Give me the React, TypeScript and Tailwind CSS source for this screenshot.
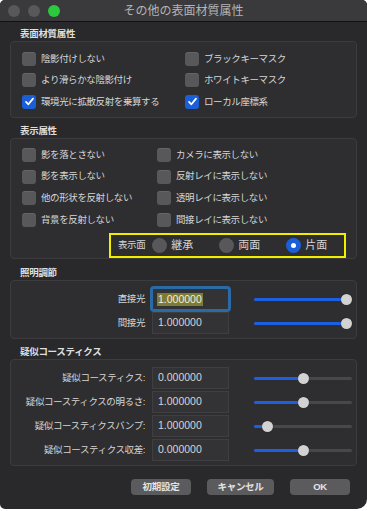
import type { ReactNode } from 'react';

const FONT = "font-['Liberation_Sans','Noto_Sans_CJK_JP',sans-serif]";

function Check({ checked, label }: { checked?: boolean; label: string }) {
  return (
    <div className="flex items-center gap-[5px]">
      {checked ? (
        <span className="w-[14px] h-[14px] rounded-[3px] bg-[#1b5fd8] flex items-center justify-center shrink-0">
          <svg width="11" height="11" viewBox="0 0 11 11">
            <path d="M2 5.8 L4.4 8.3 L9 2.6" fill="none" stroke="white" strokeWidth="1.7" strokeLinecap="round" strokeLinejoin="round" />
          </svg>
        </span>
      ) : (
        <span className="w-[14px] h-[14px] rounded-[3px] bg-[#58585a] shadow-[inset_0_1px_0_rgba(255,255,255,0.08)] shrink-0" />
      )}
      <span className="text-[9.5px] tracking-[-0.4px] text-[#d6d6d6] whitespace-nowrap">{label}</span>
    </div>
  );
}

function Radio({ on, label }: { on?: boolean; label: string }) {
  return (
    <div className="flex items-center gap-[4px]">
      {on ? (
        <span className="w-[15px] h-[15px] rounded-full bg-[#1b5fd8] flex items-center justify-center">
          <span className="w-[5px] h-[5px] rounded-full bg-white" />
        </span>
      ) : (
        <span className="w-[15px] h-[15px] rounded-full bg-[#58585a]" />
      )}
      <span className="text-[11px] text-[#d6d6d6]">{label}</span>
    </div>
  );
}

function Section({ title, mt, h, children }: { title: string; mt: string; h: string; children: ReactNode }) {
  return (
    <div className={mt}>
      <div className="h-[14px] leading-[14px] pl-[20px] text-[9.5px] tracking-[-0.3px] text-[#dedede] font-semibold">{title}</div>
      <div className={`mx-[10px] ${h} rounded-[4px] border border-[#3c3c3e] bg-[#2e2e30]`}>{children}</div>
    </div>
  );
}

function Slider({ pct, track }: { pct: number; track: string }) {
  return (
    <div className={`relative h-[11px] ${track} flex items-center`}>
      <div className="h-[3px] w-full rounded-full bg-[#48484a]" />
      <div className="absolute left-0 h-[3px] rounded-full bg-[#1c5fe0]" style={{ width: `${pct}%` }} />
      <div
        className="absolute w-[11px] h-[11px] rounded-full bg-[#d2d2d2] shadow-[0_0_1px_rgba(0,0,0,0.6)]"
        style={{ left: `calc(${pct}% - 5.5px)` }}
      />
    </div>
  );
}

function ValueRow({ label, value, pct, track, focus }: { label: string; value: string; pct: number; track: string; focus?: boolean }) {
  return (
    <div className="flex items-center h-[22px]">
      <div className="w-[134px] text-right text-[9.5px] tracking-[-0.4px] text-[#d6d6d6] whitespace-nowrap">{label}</div>
      <div
        className={`ml-[7px] w-[77px] h-[22px] flex items-center pl-[4px] text-[10.5px] ${
          focus
            ? 'border border-[#2a6ba6] shadow-[0_0_0_2px_#2a6ba6] rounded-[2px] bg-[#333335]'
            : 'border border-[#3f3f41] bg-[#333335]'
        }`}
      >
        {focus ? (
          <span className="bg-[#7c7b38] text-[#f2f2d8] px-[1px] leading-[13px]">{value}</span>
        ) : (
          <span className="text-[#d6d6d6] px-[1px]">{value}</span>
        )}
      </div>
      <div className="ml-[25px]">
        <Slider pct={pct} track={track} />
      </div>
    </div>
  );
}

function Button({ label, w }: { label: string; w: string }) {
  return (
    <div className={`${w} h-[16px] rounded-[4px] bg-[#5b5b5d] flex items-center justify-center text-[9.5px] tracking-[-0.3px] font-semibold text-[#e4e4e4]`}>
      {label}
    </div>
  );
}

export default function App() {
  return (
    <div className={`w-[367px] h-[511px] bg-white ${FONT}`}>
      <div className="w-full h-[509px] bg-[#29292b] rounded-t-[5px] rounded-bl-[5px] rounded-br-[10px] overflow-hidden flex flex-col">
        <div className="relative h-[22px] shrink-0 bg-[#3a3a3c] border-b border-[#111] flex items-center justify-center">
          <div className="absolute left-[8px] top-[5px] flex gap-[8px]">
            <span className="w-[12px] h-[12px] rounded-full bg-[#58585a]" />
            <span className="w-[12px] h-[12px] rounded-full bg-[#58585a]" />
            <span className="w-[12px] h-[12px] rounded-full bg-[#2bc840]" />
          </div>
          <span className="text-[12px] text-[#b4b4b4]">その他の表面材質属性</span>
        </div>

        <Section title="表面材質属性" mt="mt-[5px]" h="h-[77px]">
          <div className="grid grid-cols-[163px_1fr] auto-rows-[21.5px] items-center pl-[11px] pt-[6px]">
            <Check label="陰影付けしない" />
            <Check label="ブラックキーマスク" />
            <Check label="より滑らかな陰影付け" />
            <Check label="ホワイトキーマスク" />
            <Check checked label="環境光に拡散反射を乗算する" />
            <Check checked label="ローカル座標系" />
          </div>
        </Section>

        <Section title="表示属性" mt="mt-[6px]" h="h-[121px]">
          <div className="grid grid-cols-[135px_1fr] auto-rows-[21.7px] items-center pl-[11px] pt-[5px]">
            <Check label="影を落とさない" />
            <Check label="カメラに表示しない" />
            <Check label="影を表示しない" />
            <Check label="反射レイに表示しない" />
            <Check label="他の形状を反射しない" />
            <Check label="透明レイに表示しない" />
            <Check label="背景を反射しない" />
            <Check label="間接レイに表示しない" />
          </div>
          <div className="ml-[98px] mt-[2px] w-[237px] h-[25px] border-2 border-[#f2ee00] flex items-center pl-[7px]">
            <span className="text-[9.5px] tracking-[-0.4px] text-[#d6d6d6] mr-[7px]">表示面</span>
            <div className="w-[67px]"><Radio label="継承" /></div>
            <div className="w-[67px]"><Radio label="両面" /></div>
            <Radio on label="片面" />
          </div>
        </Section>

        <Section title="照明調節" mt="mt-[7px]" h="h-[59px]">
          <div className="flex flex-col gap-[2px] pt-[7px]">
            <ValueRow label="直接光" value="1.000000" pct={100} track="w-[92px]" focus />
            <ValueRow label="間接光" value="1.000000" pct={100} track="w-[92px]" />
          </div>
        </Section>

        <Section title="疑似コースティクス" mt="mt-[6px]" h="h-[107px]">
          <div className="flex flex-col gap-[2px] pt-[7px]">
            <ValueRow label="疑似コースティクス:" value="0.000000" pct={50} track="w-[98px]" />
            <ValueRow label="疑似コースティクスの明るさ:" value="1.000000" pct={50} track="w-[98px]" />
            <ValueRow label="疑似コースティクスバンプ:" value="1.000000" pct={14} track="w-[98px]" />
            <ValueRow label="疑似コースティクス収差:" value="0.000000" pct={50} track="w-[98px]" />
          </div>
        </Section>

        <div className="mt-[13px] flex justify-end gap-[16px] pr-[17px]">
          <Button label="初期設定" w="w-[60px]" />
          <Button label="キャンセル" w="w-[67px]" />
          <Button label="OK" w="w-[60px]" />
        </div>
      </div>
    </div>
  );
}
